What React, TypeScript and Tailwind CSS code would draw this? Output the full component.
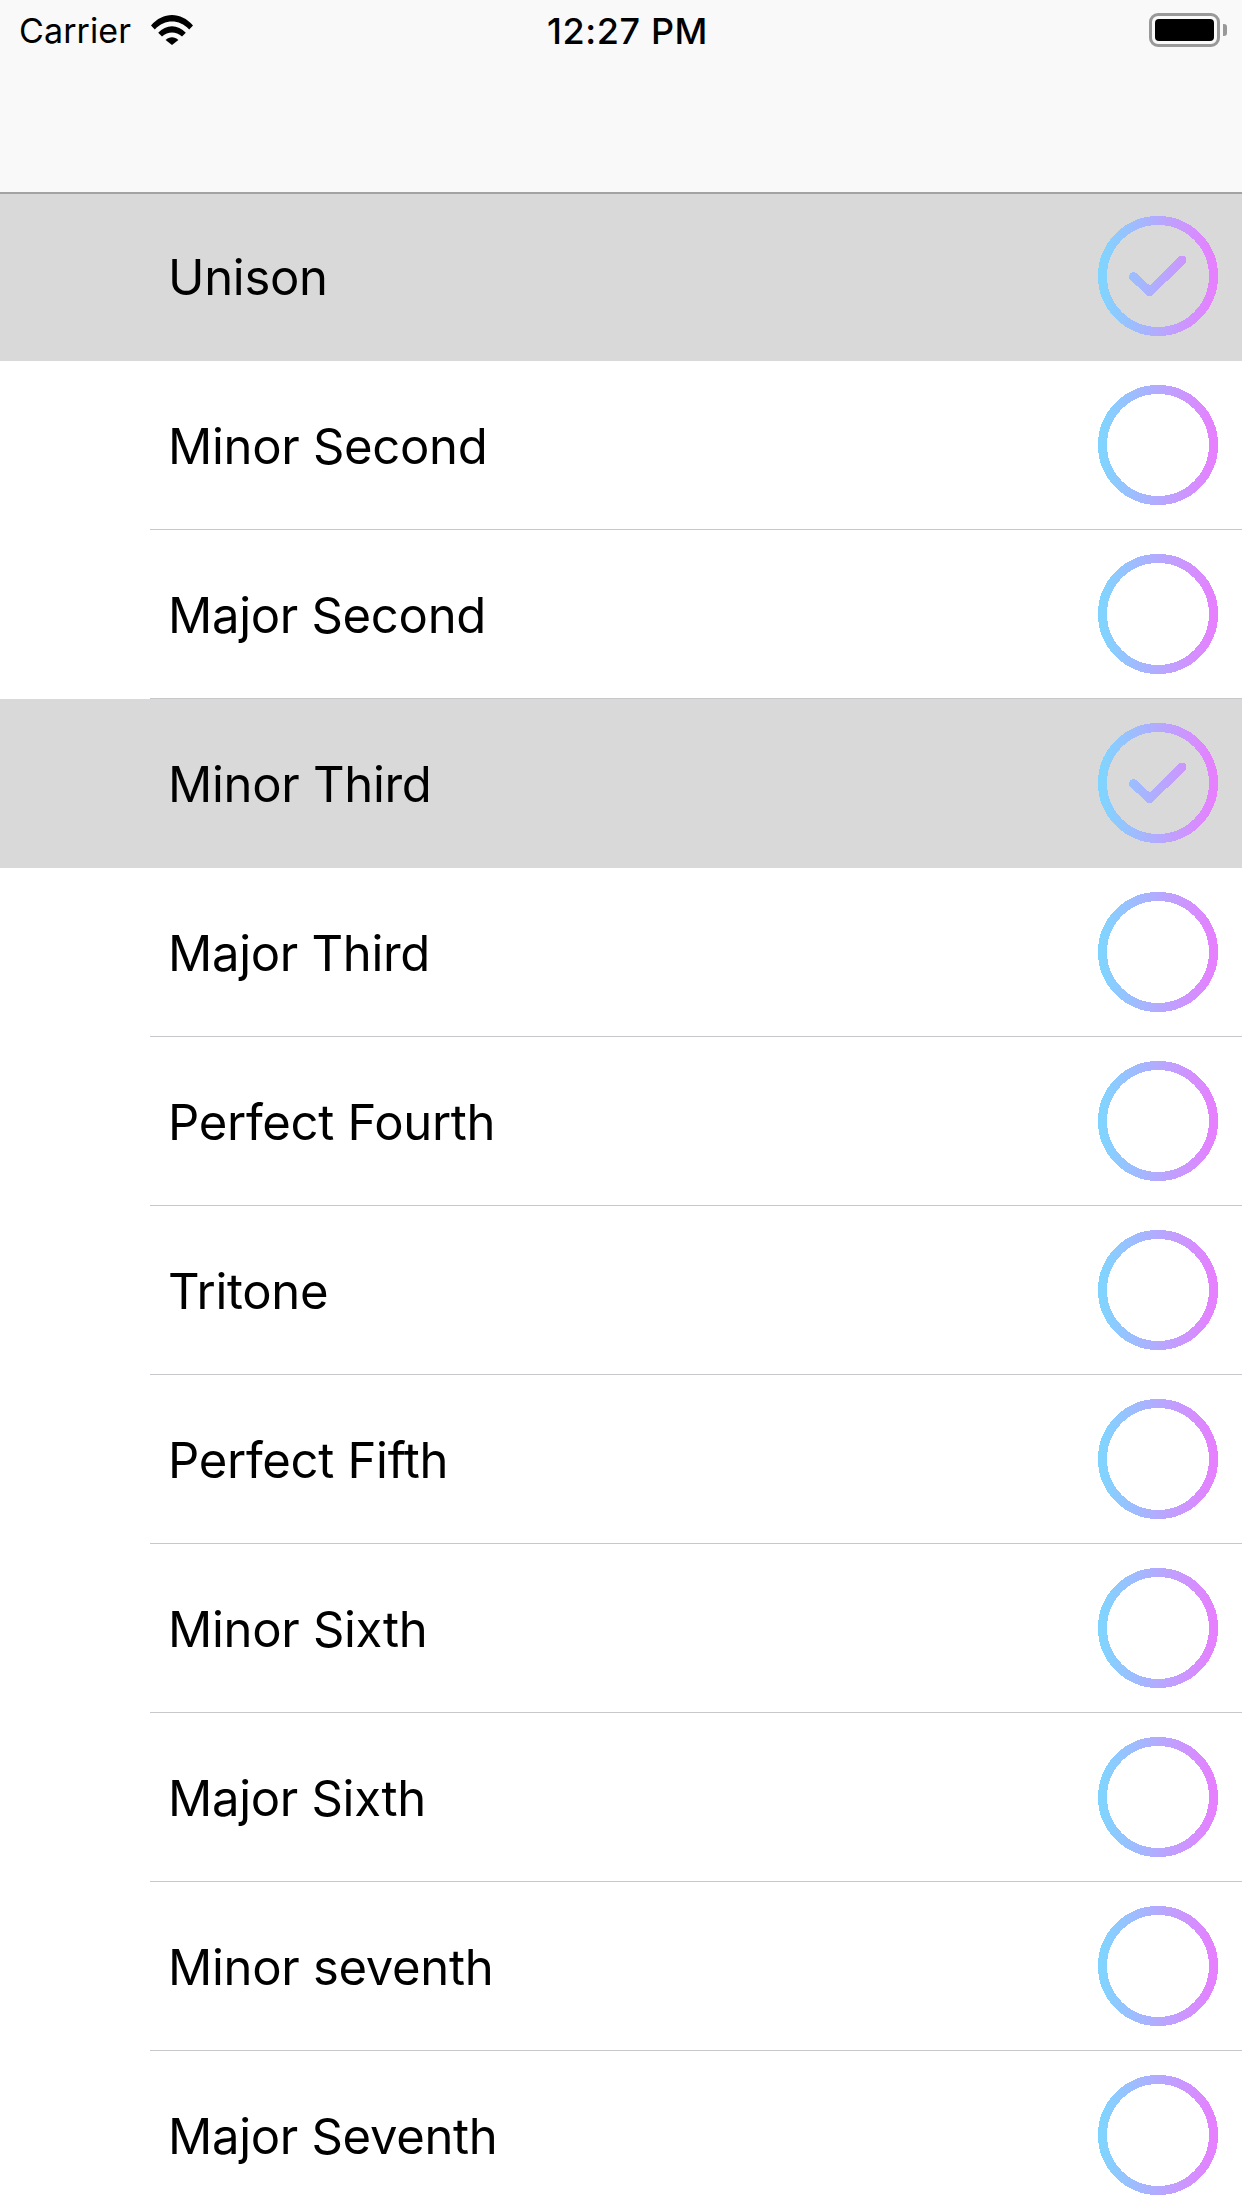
const rows: [string, boolean][] = [
  ["Unison", true],
  ["Minor Second", false],
  ["Major Second", false],
  ["Minor Third", true],
  ["Major Third", false],
  ["Perfect Fourth", false],
  ["Tritone", false],
  ["Perfect Fifth", false],
  ["Minor Sixth", false],
  ["Major Sixth", false],
  ["Minor seventh", false],
  ["Major Seventh", false],
];

function Wifi() {
  return (
    <svg width="42" height="30" viewBox="0 0 42 30" className="block mb-[2px]">
      <path d="M0 10.5 C12 -3.5 30 -3.5 42 10.5 L38.2 14.4 C28 3.9 14 3.9 3.8 14.4 Z" fill="#000" />
      <path d="M7.2 17.8 C15 9 27 9 34.8 17.8 L31 21.6 C25 16 17 16 11 21.6 Z" fill="#000" />
      <path d="M14.6 25 C18.4 21.4 23.6 21.4 27.4 25 L21 30 Z" fill="#000" />
    </svg>
  );
}

function Battery() {
  return (
    <div className="flex items-start gap-[3px]">
      <div className="w-[71px] h-[34px] rounded-[9px] border-[3px] border-[#999999] p-[3px]">
        <div className="w-full h-full rounded-[4px] bg-black" />
      </div>
      <div className="w-[4px] h-[12px] mt-[11px] rounded-r-[3px] bg-[#999999]" />
    </div>
  );
}

function Ring({ checked, id }: { checked: boolean; id: string }) {
  return (
    <svg width="120" height="120" viewBox="0 0 120 120" className="block shrink-0" shapeRendering="crispEdges">
      <defs>
        <linearGradient id={id} gradientUnits="userSpaceOnUse" x1="5" y1="0" x2="115" y2="0">
          <stop offset="0" stopColor="#81d4ff" />
          <stop offset="1" stopColor="#e680ff" />
        </linearGradient>
      </defs>
      <circle cx="60" cy="60" r="55.5" fill="none" stroke={`url(#${id})`} strokeWidth="9" />
      {checked && (
        <path
          d="M35.6 60.7 L51.7 75.7 L84 44"
          fill="none"
          stroke={`url(#${id})`}
          strokeWidth="9"
          strokeLinecap="round"
          strokeLinejoin="round"
        />
      )}
    </svg>
  );
}

export default function App() {
  return (
    <div className="w-[1242px] h-[2208px] overflow-hidden bg-white font-['Inter','Liberation_Sans',sans-serif] text-black">
      <header className="relative z-10 h-[194px] -mb-[2px] bg-[#f9f9f9] border-b-2 border-[#a3a3a3] flex items-start justify-between pl-[19px] pr-[15px] pt-[13px]">
        <div className="w-[300px] flex items-center gap-[20px] h-[36px]">
          <span className="text-[34px] leading-[36px] tracking-[0.1px]">Carrier</span>
          <Wifi />
        </div>
        <span className="text-[36px] leading-[36px] font-medium tracking-[0.6px] pl-[9px]">12:27 PM</span>
        <div className="w-[300px] flex justify-end h-[36px]">
          <Battery />
        </div>
      </header>
      <div className="flex flex-col">
        {rows.map(([label, sel], i) => (
          <div key={label} className={`h-[169px] flex flex-col ${sel ? "bg-[#d9d9d9]" : "bg-white"}`}>
            <div className="h-[168px] flex items-center justify-between pl-[168px] pr-[24px]">
              <span className="mt-[4px] text-[49px] leading-[60px] tracking-[-0.3px]">{label}</span>
              <Ring checked={sel} id={`ring-${i}`} />
            </div>
            <div className={`h-px ml-[150px] ${sel ? "bg-transparent" : "bg-[#c8c7cc]"}`} />
          </div>
        ))}
      </div>
    </div>
  );
}
